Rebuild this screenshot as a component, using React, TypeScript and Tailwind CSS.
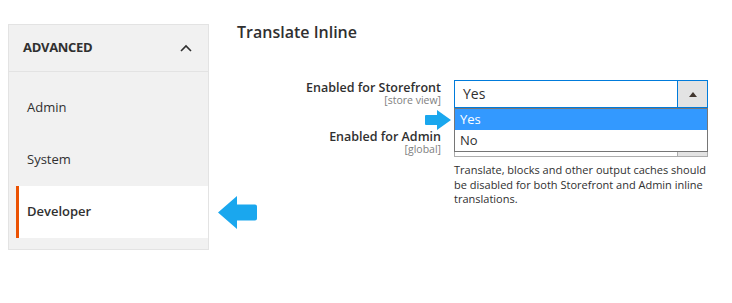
import React from 'react'

const navItems = [
  { label: 'Admin', active: false },
  { label: 'System', active: false },
  { label: 'Developer', active: true },
]

function ArrowLeft() {
  return (
    <svg width="40" height="33" viewBox="0 0 40 33" className="absolute left-[218px] top-[196px]">
      <path d="M0 16.5 L19 0 L19 8.5 L37 8.5 Q39 8.5 39 10.5 L39 22.5 Q39 24.5 37 24.5 L19 24.5 L19 33 Z" fill="#1aa7ee" />
    </svg>
  )
}

function ArrowRight() {
  return (
    <svg width="26" height="20" viewBox="0 0 26 20" className="absolute left-[425px] top-[110px]">
      <path d="M26 10 L12 0 L12 5 L1 5 Q0 5 0 6 L0 14 Q0 15 1 15 L12 15 L12 20 Z" fill="#1aa7ee" />
    </svg>
  )
}

function SelectBox({ value, active }: { value?: string; active?: boolean }) {
  return (
    <div
      className={
        'flex h-[28px] w-[254px] border bg-white ' +
        (active ? 'border-[#007bdb]' : 'border-[#adadad]')
      }
    >
      <span className="flex-1 pl-2 text-[14px] leading-[26px] text-[#303030]">{value}</span>
      <span
        className={
          'flex w-[30px] items-center justify-center border-l bg-[#e3e3e3] ' +
          (active ? 'border-[#007bdb]' : 'border-[#adadad]')
        }
      >
        <svg width="8" height="5" viewBox="0 0 8 5">
          <path d="M0 5 L4 0 L8 5 Z" fill="#41362f" />
        </svg>
      </span>
    </div>
  )
}

export default function App() {
  return (
    <div className="relative flex h-[303px] w-[732px] items-start bg-white pl-2 pt-[22px] font-['Open_Sans',sans-serif] text-[#303030]">
      {/* sidebar */}
      <aside className="mt-[2px] w-[201px] border border-[#e3e3e3] bg-[#f1f1f1]">
        <div className="flex h-[47px] items-center justify-between border-b border-[#e3e3e3] pl-[14px] pr-[16px]">
          <span className="text-[13px] font-bold tracking-[-0.3px] text-[#303030]">ADVANCED</span>
          <svg width="12" height="8" viewBox="0 0 12 8">
            <path d="M1 7 L6 2 L11 7" fill="none" stroke="#303030" strokeWidth="1.6" />
          </svg>
        </div>
        <ul className="pb-[11px] pt-[10px]">
          {navItems.map((item) => (
            <li
              key={item.label}
              className={
                'ml-[7px] flex h-[52px] items-center border-l-[3px] pl-2 text-[13px] ' +
                (item.active
                  ? 'border-[#eb5202] bg-white font-semibold'
                  : 'border-transparent')
              }
            >
              {item.label}
            </li>
          ))}
        </ul>
      </aside>

      {/* content */}
      <main className="ml-[28px] flex flex-col">
        <h2 className="text-[16px] font-semibold leading-[20px] text-[#303030]">Translate Inline</h2>

        <div className="mt-[38px] flex">
          <div className="w-[204px] text-right">
            <div className="mt-[1px] text-[12.5px] font-semibold leading-[14px]">Enabled for Storefront</div>
            <div className="text-[10.5px] leading-[10px] text-[#808080]">[store view]</div>
          </div>
          <div className="relative ml-[13px]">
            <SelectBox value="Yes" active />
            <div className="absolute left-0 top-[28px] z-10 w-[254px] border border-[#767676] bg-white">
              <div className="h-[21px] bg-[#3399ff] pl-[5px] text-[13px] leading-[21px] text-white">Yes</div>
              <div className="h-[21px] pl-[5px] text-[13px] leading-[21px] text-[#303030]">No</div>
            </div>
          </div>
        </div>

        <div className="mt-[21px] flex">
          <div className="w-[204px] text-right">
            <div className="mt-[1px] text-[12.5px] font-semibold leading-[14px]">Enabled for Admin</div>
            <div className="text-[10.5px] leading-[10px] text-[#808080]">[global]</div>
          </div>
          <div className="ml-[13px] w-[254px]">
            <SelectBox />
            <p className="mt-[6px] text-[11px] leading-[14.5px] text-[#303030]">
              Translate, blocks and other output caches should be disabled for both Storefront and Admin inline translations.
            </p>
          </div>
        </div>
      </main>

      <ArrowLeft />
      <ArrowRight />
    </div>
  )
}
